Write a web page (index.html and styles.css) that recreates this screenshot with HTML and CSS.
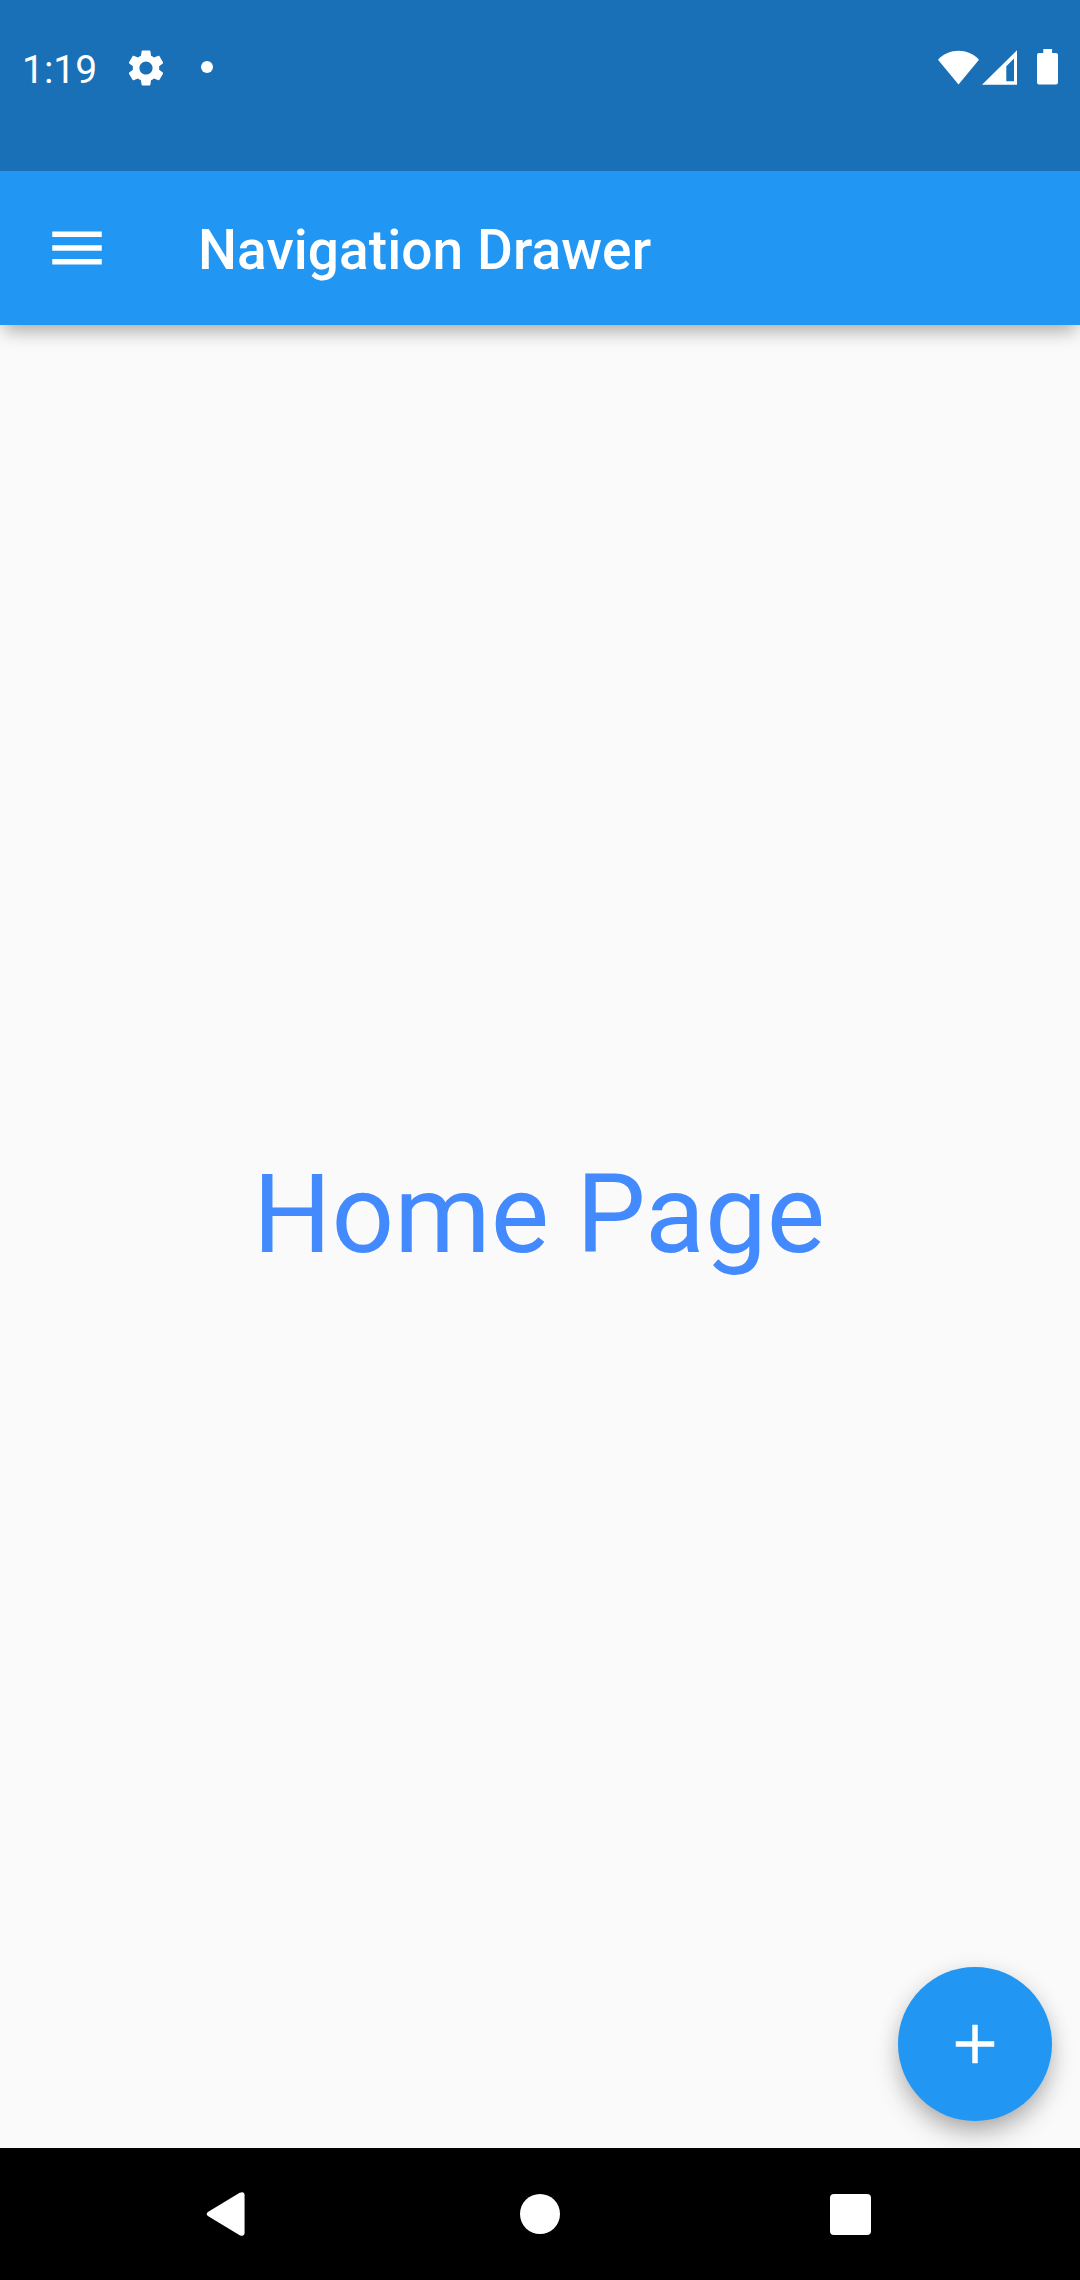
FILE: index.html
```html
<!DOCTYPE html>
<html lang="en">
<head>
<meta charset="utf-8">
<title>Navigation Drawer</title>
<link rel="stylesheet" href="styles.css">
</head>
<body>
<div class="screen">
  <div class="status-bar">
    <span class="clock">1:19</span>
    <svg class="gear" viewBox="0 0 24 24"><path d="M19.14 12.94c.04-.3.06-.61.06-.94 0-.32-.02-.64-.07-.94l2.03-1.58c.18-.14.23-.41.12-.61l-1.92-3.32c-.12-.22-.37-.29-.59-.22l-2.39.96c-.5-.38-1.03-.7-1.62-.94l-.36-2.54c-.04-.24-.24-.41-.48-.41h-3.84c-.24 0-.43.17-.47.41l-.36 2.54c-.59.24-1.13.57-1.62.94l-2.39-.96c-.22-.08-.47 0-.59.22L2.74 8.87c-.12.21-.08.47.12.61l2.03 1.58c-.05.3-.09.63-.09.94s.02.64.07.94l-2.03 1.58c-.18.14-.23.41-.12.61l1.92 3.32c.12.22.37.29.59.22l2.39-.96c.5.38 1.03.7 1.62.94l.36 2.54c.05.24.24.41.48.41h3.84c.24 0 .44-.17.47-.41l.36-2.54c.59-.24 1.13-.56 1.62-.94l2.39.96c.22.08.47 0 .59-.22l1.92-3.32c.12-.22.07-.47-.12-.61zM12 15.6c-1.98 0-3.6-1.62-3.6-3.6s1.62-3.6 3.6-3.6 3.6 1.62 3.6 3.6-1.62 3.6-3.6 3.6z"/></svg>
    <span class="dot"></span>
    <div class="status-icons">
      <svg class="wifi" viewBox="0 0 42 36"><path d="M0 9.7C11-2.2 30-2.2 41 9.7L20.5 34.5z"/></svg>
      <svg class="signal" viewBox="0 0 35 36"><path fill-rule="evenodd" d="M35 .3V34.8H0zM32 8.5L24.3 16.2V31.2H32z"/></svg>
      <svg class="battery" viewBox="0 0 21 36"><path d="M6.3 0h8.8v4H19q2 0 2 2v27.500q0 2-2 2H2q-2 0-2-2V6q0-2 2-2h4.300z"/></svg>
    </div>
  </div>
  <header class="app-bar">
    <svg class="icon" viewBox="0 0 24 24"><path d="M3 18h18v-2H3v2zm0-5h18v-2H3v2zm0-7v2h18V6H3z"/></svg>
    <h1 class="title">Navigation Drawer</h1>
  </header>
  <main class="content">
    <p class="page-name">Home Page</p>
    <button class="fab" aria-label="Add"><svg class="icon" viewBox="0 0 24 24"><path d="M19 13h-6v6h-2v-6H5v-2h6V5h2v6h6v2z"/></svg></button>
  </main>
  <nav class="system-nav">
    <svg class="back" viewBox="0 0 39 46"><path d="M1.500 20.500L34 .8Q39-1 39 3.500V41.500Q39 46 34 44.200L1.500 24.500Q-1 22.500 1.500 20.500z"/></svg>
    <span class="home"></span>
    <span class="recent"></span>
  </nav>
</div>
</body>
</html>
```
FILE: styles.css
```css
* { box-sizing: border-box; }
body { margin: 0; font-family: Roboto, sans-serif; }
svg { display: block; fill: #fff; flex: none; }

.screen {
  width: 1080px;
  height: 2280px;
  display: flex;
  flex-direction: column;
  background: #fafafa;
}

.status-bar {
  position: relative;
  z-index: 2;
  height: 171px;
  padding: 46px 21px 0 22px;
  display: flex;
  align-items: flex-start;
  background: #1a70b7;
  color: #fff;
}
.clock { width: 102px; padding-top: 1px; font-size: 39px; line-height: 46px; }
.gear { width: 44px; height: 44px; }
.dot {
  width: 12px;
  height: 12px;
  margin: 15px 0 0 33px;
  border-radius: 50%;
  background: #fff;
}
.status-icons { display: flex; margin: 4px 1px 0 auto; }
.wifi { width: 42px; height: 36px; }
.signal { width: 35px; height: 36px; margin-left: 2px; }
.battery { width: 21px; height: 36px; margin: -1px 0 0 20px; }

.app-bar {
  position: relative;
  z-index: 1;
  height: 154px;
  padding: 0 44px;
  display: flex;
  align-items: center;
  gap: 88px;
  background: #2196f3;
  box-shadow: 0 11px 18px -5px rgba(0, 0, 0, .26), 0 3px 18px rgba(0, 0, 0, .1);
}
.icon { width: 66px; height: 66px; }
.title {
  margin: 0;
  padding-top: 3px;
  color: #fff;
  font-size: 55px;
  font-weight: 500;
  line-height: 64px;
  letter-spacing: .07px;
}

.content {
  flex: 1;
  display: grid;
  overflow: hidden;
}
.content > * { grid-area: 1 / 1; }
.page-name {
  place-self: center;
  margin: 0;
  padding: 0 2px 44px 0;
  color: #448aff;
  font-size: 110px;
  line-height: 129px;
}
.fab {
  place-self: end;
  width: 154px;
  height: 154px;
  margin: 0 28px 27.5px 0;
  padding: 0;
  display: grid;
  place-items: center;
  border: 0;
  border-radius: 50%;
  background: #2196f3;
  box-shadow: 0 15px 28px -5px rgba(0, 0, 0, .3), 0 3px 22px rgba(0, 0, 0, .1);
}

.system-nav {
  height: 132px;
  padding: 0 209px 0 206px;
  display: flex;
  align-items: center;
  justify-content: space-between;
  background: #000;
}
.back { width: 39px; height: 45px; }
.home { width: 40px; height: 40px; margin-left: 5px; border-radius: 50%; background: #fff; }
.recent { width: 41px; height: 41px; border-radius: 4px; background: #fff; }
```
